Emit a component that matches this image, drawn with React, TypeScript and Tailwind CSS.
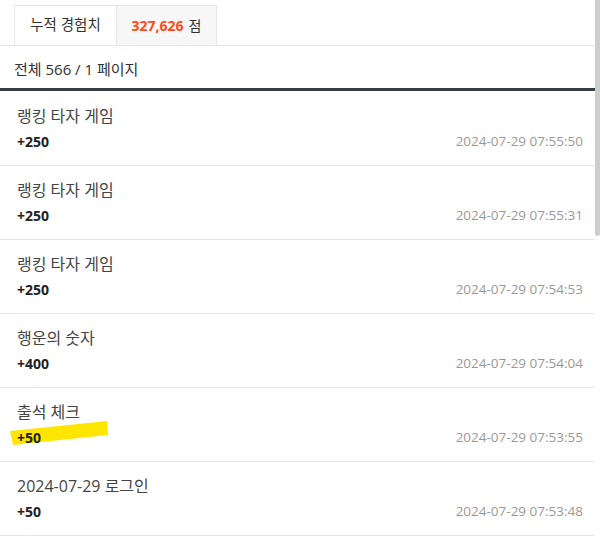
import React from 'react';

type Entry = {
  title: string;
  amount: string;
  date: string;
  highlight?: boolean;
};

const entries: Entry[] = [
  { title: '랭킹 타자 게임', amount: '+250', date: '2024-07-29 07:55:50' },
  { title: '랭킹 타자 게임', amount: '+250', date: '2024-07-29 07:55:31' },
  { title: '랭킹 타자 게임', amount: '+250', date: '2024-07-29 07:54:53' },
  { title: '행운의 숫자', amount: '+400', date: '2024-07-29 07:54:04' },
  { title: '출석 체크', amount: '+50', date: '2024-07-29 07:53:55', highlight: true },
  { title: '2024-07-29 로그인', amount: '+50', date: '2024-07-29 07:53:48' },
];

const font = "font-['Open_Sans','Noto_Sans_CJK_KR',sans-serif]";

const App: React.FC = () => {
  return (
    <div className={`relative w-[600px] h-[541px] overflow-hidden bg-white ${font}`}>
      <div className="w-[595px]">
        {/* tabs */}
        <div className="flex pt-[5px] pl-[14px] border-b border-[#e8e8e8]">
          <div className="h-[40px] w-[103px] flex items-center justify-center bg-white border border-b-0 border-[#e6e6e6] -mb-px text-[14.5px] text-[#333] leading-none">
            누적 경험치
          </div>
          <div className="h-[40px] w-[100px] flex items-center justify-center bg-[#f7f7f7] border border-l-0 border-b-0 border-[#e6e6e6] text-[14px] leading-none">
            <span className="font-bold text-[#ff4a1a]">327,626</span>
            <span className="ml-[5px] text-[#333]">점</span>
          </div>
        </div>

        <div className="h-[42px] flex items-center pl-[14px] pt-[5px] text-[15px] text-[#333] leading-none">
          전체 566 / 1 페이지
        </div>
        <div className="h-[3px] bg-[#363d45]" />

        {/* list */}
        <ul className="pt-px">
          {entries.map((e, i) => (
            <li key={i} className="relative h-[74px] border-b border-[#e8e8e8] pl-[17px] pr-[12px] pt-[13px]">
              <div className="text-[16px] text-[#444] leading-[22px]">{e.title}</div>
              <div className="flex items-center justify-between mt-[4px] leading-[21px]">
                {e.highlight && (
                  <svg className="absolute left-[10px] top-[33px]" width="100" height="26" viewBox="0 0 100 26">
                    <path d="M0 10 L97 0 L98 14 L3 24 Z" fill="#ffe600" />
                  </svg>
                )}
                <span className="relative text-[14px] font-bold text-[#222]">{e.amount}</span>
                <span className="text-[13.5px] text-[#999]">{e.date}</span>
              </div>
            </li>
          ))}
        </ul>
      </div>

      {/* scrollbar thumb */}
      <div className="absolute right-0 top-0 w-[5px] h-[236px] bg-[#cdcdcd] rounded-b-[3px]" />
    </div>
  );
};

export default App;
